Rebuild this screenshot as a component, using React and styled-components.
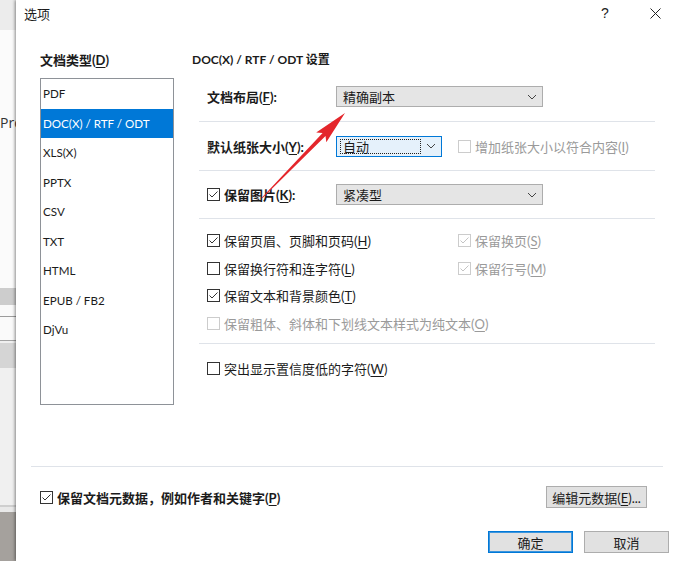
import React from "react";
import styled, { createGlobalStyle } from "styled-components";

const GlobalStyle = createGlobalStyle`
  html, body { margin: 0; padding: 0; background: #fff; }
  body {
    font-family: Lato, "Noto Sans CJK SC", sans-serif;
    font-size: 13px;
    color: #1b1b1b;
  }
  u { text-underline-offset: 2px; }
`;

const Page = styled.div`
  position: relative;
  display: flex;
  width: 680px;
  height: 561px;
  overflow: hidden;
`;

const Backdrop = styled.div`
  width: 16px;
  flex-shrink: 0;
  display: flex;
  flex-direction: column;
  overflow: hidden;
`;

const BackBand = styled.div`
  height: ${(p) => (p.h ? `${p.h}px` : "auto")};
  flex: ${(p) => (p.h ? "0 0 auto" : "1")};
  background: ${(p) => p.bg};
  font-family: "Open Sans", sans-serif;
  font-size: 14px;
  color: #333;
  white-space: nowrap;
  padding-top: ${(p) => p.pt || 0}px;
  box-sizing: border-box;
`;

const Dialog = styled.div`
  flex: 1;
  display: flex;
  flex-direction: column;
  background: #fff;
  box-shadow: -1px 0 3px rgba(0, 0, 0, 0.45);
  z-index: 1;
`;

const TitleBar = styled.div`
  height: 28px;
  display: flex;
  align-items: center;
  padding: 0 2px 2px 8px;
  box-sizing: border-box;
  gap: 4px;
`;

const Title = styled.div`
  flex: 1;
  font-size: 13px;
`;

const TitleButton = styled.div`
  width: 46px;
  height: 26px;
  display: flex;
  align-items: center;
  justify-content: center;
  font-family: "Liberation Sans", sans-serif;
  font-size: 14px;
  color: #222;
`;

const Content = styled.div`
  height: 438px;
  display: flex;
  padding-left: 24px;
`;

const LeftCol = styled.div`
  width: 134px;
  display: flex;
  flex-direction: column;
`;

const RightCol = styled.div`
  margin-left: 18px;
  flex: 1;
  display: flex;
  flex-direction: column;
`;

const Heading = styled.div`
  margin-top: 24px;
  line-height: 16px;
  font-weight: 700;
  font-size: ${(p) => p.size || 13}px;
`;

const List = styled.div`
  margin-top: 10px;
  height: 327px;
  box-sizing: border-box;
  border: 1px solid #8e9298;
  display: flex;
  flex-direction: column;
`;

const ListItem = styled.div`
  height: 29.5px;
  flex-shrink: 0;
  display: flex;
  align-items: center;
  padding-left: 2px;
  font-size: 11.6px;
  background: ${(p) => (p.selected ? "#0078d7" : "transparent")};
  color: ${(p) => (p.selected ? "#fff" : "#1b1b1b")};
`;

const Section = styled.div`
  margin: 4px 0 0 7px;
  width: 456px;
  display: flex;
  flex-direction: column;
`;

const Row = styled.div`
  height: ${(p) => p.h}px;
  display: flex;
  align-items: center;
  padding-left: 8px;
  border-bottom: ${(p) => (p.sep ? "1px solid #dfe3e9" : "none")};
`;

const Label = styled.div`
  width: 129px;
  display: flex;
  align-items: center;
  gap: 4px;
  font-weight: 700;
  white-space: nowrap;
`;

const Select = styled.div`
  width: ${(p) => p.w}px;
  height: 21px;
  box-sizing: border-box;
  display: flex;
  align-items: center;
  padding: ${(p) => (p.focused ? "0 0 0 3px" : "0 0 0 6px")};
  background: ${(p) => (p.focused ? "#e5f1fb" : "#e5e5e5")};
  border: 1px solid ${(p) => (p.focused ? "#0078d7" : "#adadad")};
`;

const SelectText = styled.div`
  flex: 1;
  white-space: nowrap;
`;

const FocusText = styled.div`
  width: 82px;
  height: 15px;
  box-sizing: border-box;
  border: 1px dotted #222;
  display: flex;
  align-items: center;
  padding-left: 2px;
`;

const Chevron = styled.div`
  width: 20px;
  display: flex;
  align-items: center;
  justify-content: center;
`;

const CheckGrid = styled.div`
  display: grid;
  grid-template-columns: 251px 1fr;
  grid-auto-rows: 27.5px;
  padding: 8px 0 6px 8px;
  border-bottom: 1px solid #dfe3e9;
`;

const CheckItem = styled.label`
  display: flex;
  align-items: center;
  gap: 4px;
  white-space: nowrap;
  margin-left: ${(p) => p.ml || 0}px;
  grid-column: ${(p) => (p.span ? "1 / -1" : "auto")};
  color: ${(p) => (p.disabled ? "#9a9a9a" : "inherit")};
  font-weight: ${(p) => (p.bold ? 700 : 400)};
`;

const Box = styled.span`
  width: 13px;
  height: 13px;
  box-sizing: border-box;
  flex-shrink: 0;
  border: 1px solid ${(p) => (p.disabled ? "#cccccc" : "#333")};
  background: #fff;
  display: flex;
  align-items: center;
  justify-content: center;
`;

const Separator = styled.div`
  height: 1px;
  background: #dfe3e9;
  margin: 0 17px 0 15px;
`;

const MetaRow = styled.div`
  height: 60px;
  display: flex;
  align-items: center;
  justify-content: space-between;
  padding: 0 33px 0 24px;
`;

const Button = styled.div`
  width: ${(p) => p.w}px;
  height: 22px;
  box-sizing: border-box;
  display: flex;
  align-items: center;
  justify-content: center;
  background: #e1e1e1;
  border: 1px solid ${(p) => (p.primary ? "#0078d7" : "#adadad")};
  box-shadow: ${(p) => (p.primary ? "inset 0 0 0 1px #3c95dd" : "none")};
  white-space: nowrap;
`;

const ButtonRow = styled.div`
  display: flex;
  justify-content: flex-end;
  gap: 11px;
  padding: 4px 11px 0 0;
`;

const Overlay = styled.svg`
  position: absolute;
  left: 0;
  top: 0;
  pointer-events: none;
  z-index: 2;
`;

const backBands = [
  { h: 30, bg: "#ececec" },
  { h: 258, bg: "#fbfbfb", pt: 83, text: "Pro" },
  { h: 17, bg: "#cdcdcd" },
  { h: 11, bg: "#fafafa" },
  { h: 1, bg: "#9c9c9c" },
  { h: 23, bg: "#fafafa" },
  { h: 1, bg: "#a3a3a3" },
  { h: 2, bg: "#f0f0f0" },
  { h: 25, bg: "#d5d5d5" },
  { h: 137, bg: "#f0f0f0" },
  { h: 2, bg: "#cfcfcf" },
  { h: 5, bg: "#e9e9e9" },
  { bg: "#a5a19d" },
];

const formats = ["PDF", "DOC(X) / RTF / ODT", "XLS(X)", "PPTX", "CSV", "TXT", "HTML", "EPUB / FB2", "DjVu"];

const Check = ({ checked, disabled }) => (
  <Box disabled={disabled}>
    {checked && (
      <svg width="11" height="11" viewBox="0 0 11 11">
        <path d="M1.5 5.5 L4 8 L9.5 2.5" fill="none" stroke={disabled ? "#c4c4c4" : "#333"} strokeWidth="1" />
      </svg>
    )}
  </Box>
);

const Down = () => (
  <Chevron>
    <svg width="10" height="6" viewBox="0 0 10 6">
      <path d="M1 1 L5 5 L9 1" fill="none" stroke="#444" strokeWidth="1" />
    </svg>
  </Chevron>
);

const App = () => {
  return (
    <Page>
      <GlobalStyle />
      <Backdrop>
        {backBands.map((b, i) => (
          <BackBand key={i} h={b.h} bg={b.bg} pt={b.pt}>
            {b.text}
          </BackBand>
        ))}
      </Backdrop>
      <Dialog>
        <TitleBar>
          <Title>选项</Title>
          <TitleButton>?</TitleButton>
          <TitleButton>
            <svg width="11" height="11" viewBox="0 0 11 11">
              <path d="M0.5 0.5 L10.5 10.5 M10.5 0.5 L0.5 10.5" stroke="#222" strokeWidth="1" />
            </svg>
          </TitleButton>
        </TitleBar>

        <Content>
          <LeftCol>
            <Heading>
              文档类型(<u>D</u>)
            </Heading>
            <List>
              {formats.map((f, i) => (
                <ListItem key={f} selected={i === 1}>
                  {f}
                </ListItem>
              ))}
            </List>
          </LeftCol>

          <RightCol>
            <Heading size={12}>DOC(X) / RTF / ODT 设置</Heading>
            <Section>
              <Row h={49} sep>
                <Label>
                  <span>
                    文档布局(<u>F</u>):
                  </span>
                </Label>
                <Select w={207}>
                  <SelectText>精确副本</SelectText>
                  <Down />
                </Select>
              </Row>
              <Row h={48} sep>
                <Label>
                  <span>
                    默认纸张大小(<u>Y</u>):
                  </span>
                </Label>
                <Select w={106} focused>
                  <FocusText>自动</FocusText>
                  <Down />
                </Select>
                <CheckItem disabled ml={16}>
                  <Check disabled />
                  <span>
                    增加纸张大小以符合内容(<u>I</u>)
                  </span>
                </CheckItem>
              </Row>
              <Row h={47} sep>
                <Label>
                  <Check checked />
                  <span>
                    保留图片(<u>K</u>):
                  </span>
                </Label>
                <Select w={207}>
                  <SelectText>紧凑型</SelectText>
                  <Down />
                </Select>
              </Row>
              <CheckGrid>
                <CheckItem>
                  <Check checked />
                  <span>
                    保留页眉、页脚和页码(<u>H</u>)
                  </span>
                </CheckItem>
                <CheckItem disabled>
                  <Check checked disabled />
                  <span>
                    保留换页(<u>S</u>)
                  </span>
                </CheckItem>
                <CheckItem>
                  <Check />
                  <span>
                    保留换行符和连字符(<u>L</u>)
                  </span>
                </CheckItem>
                <CheckItem disabled>
                  <Check checked disabled />
                  <span>
                    保留行号(<u>M</u>)
                  </span>
                </CheckItem>
                <CheckItem span>
                  <Check checked />
                  <span>
                    保留文本和背景颜色(<u>T</u>)
                  </span>
                </CheckItem>
                <CheckItem span disabled>
                  <Check disabled />
                  <span>
                    保留粗体、斜体和下划线文本样式为纯文本(<u>O</u>)
                  </span>
                </CheckItem>
              </CheckGrid>
              <Row h={48}>
                <CheckItem>
                  <Check />
                  <span>
                    突出显示置信度低的字符(<u>W</u>)
                  </span>
                </CheckItem>
              </Row>
            </Section>
          </RightCol>
        </Content>

        <Separator />
        <MetaRow>
          <CheckItem bold>
            <Check checked />
            <span>
              保留文档元数据，例如作者和关键字(<u>P</u>)
            </span>
          </CheckItem>
          <Button w={101}>
            <span>
              编辑元数据(<u>E</u>)...
            </span>
          </Button>
        </MetaRow>
        <ButtonRow>
          <Button w={85} primary>
            确定
          </Button>
          <Button w={85}>取消</Button>
        </ButtonRow>
      </Dialog>

      <Overlay width="680" height="561" viewBox="0 0 680 561">
        <polygon
          points="262.3,198.3 325.5,135.9 326.3,142.2 345,113 316.2,132.4 322.6,133.1 261.7,197.7"
          fill="#e4262b"
        />
      </Overlay>
    </Page>
  );
};

export default App;
